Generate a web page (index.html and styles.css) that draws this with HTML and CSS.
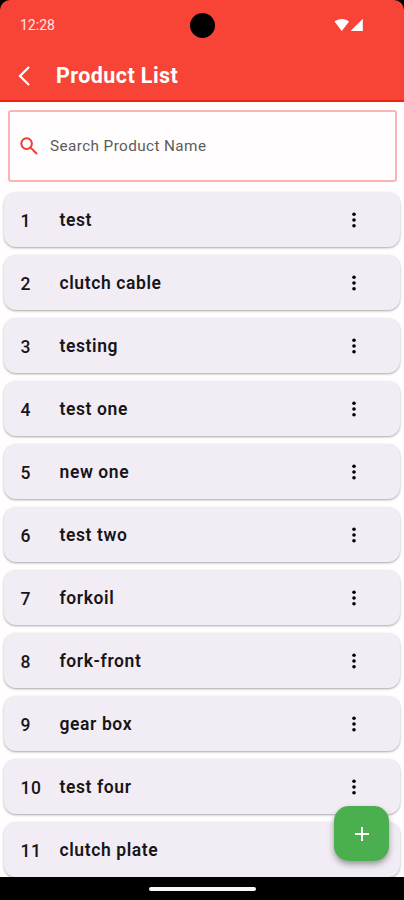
FILE: index.html
```html
<!DOCTYPE html>
<html lang="en">
<head>
    <meta charset="UTF-8">
    <meta name="viewport" content="width=device-width, initial-scale=1.0">
    <title>Product List</title>
    <link rel="stylesheet" href="styles.css">
</head>
<body>
    <svg class="sprite">
        <symbol id="dots" viewBox="0 0 6 18">
            <circle cx="3" cy="3.2" r="1.8"/>
            <circle cx="3" cy="9" r="1.8"/>
            <circle cx="3" cy="14.8" r="1.8"/>
        </symbol>
    </svg>
    <div class="phone">
        <header class="header">
            <div class="status-bar">
                <span class="time">12:28</span>
                <span class="camera"></span>
                <svg class="signal" viewBox="0 0 30 14">
                    <path d="M0.5 3.6C4.6 0.1 11 0.1 15.1 3.6L7.8 13z"/>
                    <path d="M28.8 0.8V13H16.6z"/>
                </svg>
            </div>
            <div class="app-bar">
                <svg class="back" viewBox="0 0 14 22">
                    <path d="M12 2L3 11L12 20"/>
                </svg>
                <h1>Product List</h1>
            </div>
        </header>

        <main class="content">
            <div class="search">
                <svg class="search-icon" viewBox="0 0 18 18">
                    <circle cx="6.6" cy="6.6" r="5.3"/>
                    <path d="M10.6 10.6L17 17"/>
                </svg>
                <span>Search Product Name</span>
            </div>
            <div class="product-list" id="products"></div>
        </main>

        <button class="add" aria-label="Add product">
            <svg viewBox="0 0 16 16"><path d="M8 1V15M1 8H15"/></svg>
        </button>
        <footer class="nav-bar"><span class="handle"></span></footer>
    </div>

    <script>
        const products = ['test', 'clutch cable', 'testing', 'test one', 'new one', 'test two',
            'forkoil', 'fork-front', 'gear box', 'test four', 'clutch plate'];

        document.getElementById('products').innerHTML = products.map((name, i) => `
            <div class="product">
                <span class="number">${i + 1}</span>
                <span class="name">${name}</span>
                <svg class="menu"><use href="#dots"/></svg>
            </div>`).join('');
    </script>
</body>
</html>
```
FILE: styles.css
```css
* {
    box-sizing: border-box;
}
body {
    margin: 0;
    background-color: #000;
    font-family: Roboto, sans-serif;
}
.sprite {
    display: none;
}
.phone {
    position: relative;
    display: flex;
    flex-direction: column;
    width: 404px;
    height: 900px;
    overflow: hidden;
}
.header {
    flex: none;
    height: 102px;
    background-color: #f84437;
    border-bottom: 2px solid #f2200e;
    border-radius: 10px 10px 0 0;
    color: #fff;
}
.status-bar {
    display: grid;
    grid-template-columns: 1fr 25px 1fr;
    align-items: center;
    height: 50px;
    padding: 0 40px 0 20px;
}
.time {
    font-size: 14px;
    color: #ffe9e6;
}
.camera {
    width: 25px;
    height: 25px;
    margin-left: 10px;
    background-color: #000;
    border-radius: 50%;
}
.signal {
    justify-self: end;
    width: 30px;
    height: 14px;
    fill: #fff;
}
.app-bar {
    display: flex;
    align-items: center;
    height: 51px;
    padding-left: 17px;
}
.back {
    width: 14px;
    height: 22px;
    margin-right: 25px;
    fill: none;
    stroke: #fff;
    stroke-width: 2.2;
}
h1 {
    margin: 0;
    font-size: 21.5px;
    font-weight: bold;
    letter-spacing: 0.42px;
}
.content {
    flex: 1;
    min-height: 0;
    padding: 8px 4px 0;
    overflow: hidden;
    background-color: #fffdfe;
}
.search {
    display: flex;
    align-items: center;
    height: 72px;
    margin: 0 3px 10px 4px;
    padding-left: 10px;
    border: 2px solid #f9b5b2;
    border-radius: 3px;
    font-size: 15.3px;
    letter-spacing: 0.4px;
    color: #5c5c5c;
}
.search-icon {
    width: 18px;
    height: 18px;
    margin-right: 12px;
    fill: none;
    stroke: #f13a30;
    stroke-width: 2;
}
.product {
    display: flex;
    align-items: center;
    height: 55px;
    margin-bottom: 8px;
    padding: 0 43px 0 16px;
    background-color: #f2edf5;
    border-radius: 12px;
    box-shadow: 0 1px 2px rgba(0,0,0,0.24), 0 1px 3px rgba(0,0,0,0.12);
    color: #17151a;
}
.number {
    width: 39.5px;
    padding: 3px 0 0 0.5px;
    font-size: 17.5px;
    font-weight: 500;
    letter-spacing: 0.6px;
}
.name {
    flex: 1;
    font-size: 17.5px;
    font-weight: 600;
    letter-spacing: 0.6px;
}
.menu {
    width: 6px;
    height: 18px;
}
.add {
    position: absolute;
    right: 15px;
    bottom: 39px;
    display: flex;
    align-items: center;
    justify-content: center;
    width: 55px;
    height: 55px;
    padding: 0;
    background-color: #4baf50;
    border: none;
    border-radius: 15px;
    box-shadow: 0 3px 5px rgba(0,0,0,0.25), 0 4px 9px rgba(0,0,0,0.15);
}
.add svg {
    width: 16px;
    height: 16px;
    fill: none;
    stroke: #fff;
    stroke-width: 2;
}
.nav-bar {
    display: flex;
    flex: none;
    align-items: center;
    justify-content: center;
    height: 23px;
    background-color: #000;
}
.handle {
    width: 107px;
    height: 4px;
    border-radius: 2px;
    background-color: #f8f8f8;
}
```
